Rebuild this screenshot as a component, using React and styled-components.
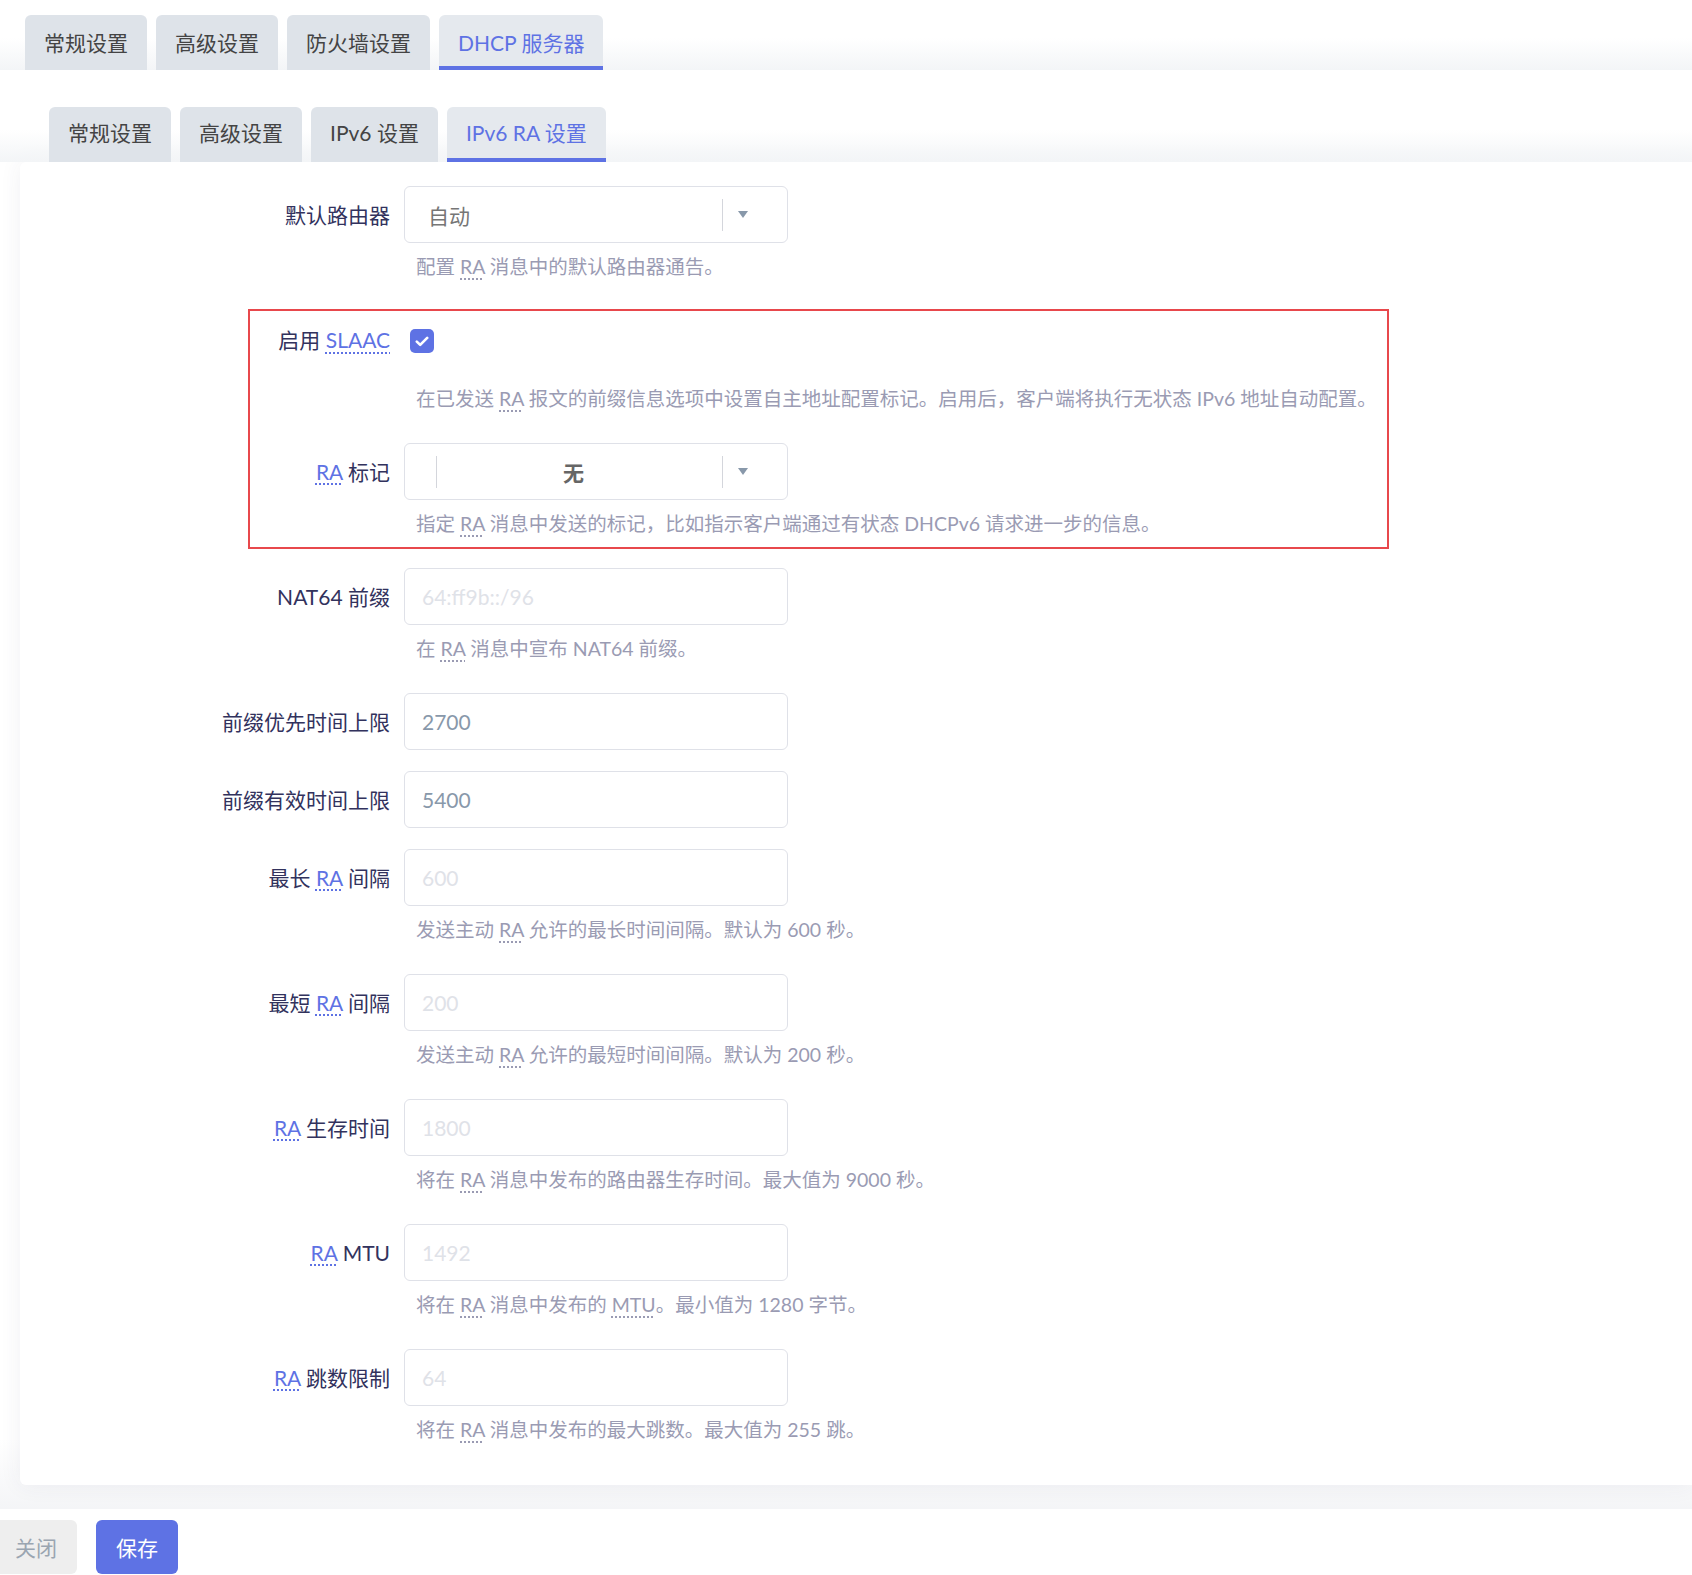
import styled, { createGlobalStyle } from "styled-components";

const GlobalStyle = createGlobalStyle`
  html, body {
    margin: 0;
    padding: 0;
    background: #fff;
    overflow: hidden;
  }
  body {
    font-family: Lato, "Noto Sans CJK SC", sans-serif;
  }
`;

const Page = styled.div`
  width: 1692px;
  height: 1575px;
`;

const TabMenu = styled.ul`
  position: relative;
  z-index: 1;
  list-style: none;
  margin: ${(p) => p.$top}px 0 0;
  padding: 0 0 0 ${(p) => p.$indent}px;
  display: flex;
  gap: 9px;
  background: linear-gradient(180deg, rgba(243, 245, 247, 0) 0%, #f3f5f7 100%)
    bottom / 100% 32px no-repeat;
`;

const Tab = styled.li`
  height: 55px;
  padding: 0 19px ${(p) => p.$lift || 2}px;
  box-sizing: border-box;
  display: flex;
  align-items: center;
  font-size: 21px;
  color: ${(p) => (p.$active ? "#5e72e4" : "#444")};
  background: ${(p) => (p.$active ? "#e5e9ee" : "#dee3e9")};
  border-radius: 6px 6px 0 0;
  box-shadow: ${(p) => (p.$active ? "inset 0 -4px 0 #5e72e4" : "none")};
  white-space: nowrap;
`;

const Body = styled.div`
  padding-bottom: 24px;
  background: linear-gradient(180deg, rgba(244, 245, 247, 0) 0%, #f4f5f7 100%)
    bottom / 100% 70px no-repeat;
`;

const Panel = styled.div`
  position: relative;
  margin-left: 20px;
  padding: 24px 0 32px;
  background: #fff;
  border-radius: 6px 0 0 6px;
  box-shadow: 0 0 22px rgba(50, 50, 93, 0.07);
`;

const Form = styled.div`
  display: flex;
  flex-direction: column;
  gap: 21px;
`;

const Highlight = styled.div`
  position: absolute;
  left: 228px;
  top: 147px;
  width: 1141px;
  height: 240px;
  box-sizing: border-box;
  border: 2px solid #e8484c;
  pointer-events: none;
`;

const Row = styled.div`
  display: grid;
  grid-template-columns: 370px 1fr;
  column-gap: 14px;
`;

const Label = styled.label`
  grid-column: 1;
  align-self: center;
  margin-bottom: ${(p) => p.$raise || 0}px;
  text-align: right;
  font-size: 21px;
  line-height: 28px;
  color: #32325d;
  white-space: nowrap;
`;

const Control = styled.div`
  grid-column: 2;
  height: ${(p) => p.$h || 57}px;
  display: flex;
  align-items: center;
`;

const Description = styled.div`
  grid-column: 2;
  padding: 10px 0 9px 12px;
  font-size: 19.5px;
  line-height: 28px;
  color: #9a9bb3;
  white-space: nowrap;
`;

const Abbr = styled.abbr`
  color: ${(p) => (p.$accent ? "#5e72e4" : "inherit")};
  text-decoration: underline dotted;
  text-decoration-color: ${(p) => (p.$accent ? "#5e72e4" : "#9a9bb3")};
  text-underline-offset: 4px;
  text-decoration-thickness: 2px;
  cursor: help;
`;

const TextInput = styled.input`
  width: 384px;
  height: 57px;
  box-sizing: border-box;
  border: 1px solid #dfe1e8;
  border-radius: 6px;
  padding: 0 17px;
  font-family: inherit;
  font-size: 21px;
  color: #8898aa;
  background: #fff;
  outline: none;

  &::placeholder {
    color: #dfe2e8;
  }
`;

const Select = styled.div`
  width: 384px;
  height: 57px;
  box-sizing: border-box;
  border: 1px solid #dfe1e8;
  border-radius: 6px;
  display: flex;
  align-items: center;
  background: #fff;
`;

const SelectValue = styled.span`
  flex: 1;
  padding: ${(p) => (p.$center ? "0 12px 0 0" : "0 0 0 23px")};
  text-align: ${(p) => (p.$center ? "center" : "left")};
  font-size: 21px;
  font-weight: ${(p) => (p.$center ? 700 : 400)};
  color: ${(p) => (p.$center ? "#666" : "#767676")};
`;

const Divider = styled.span`
  width: 1px;
  height: 32px;
  background: #d4d6dc;
  margin-left: ${(p) => p.$left || 0}px;
`;

const Caret = styled.span`
  width: 64px;
  display: flex;
  align-items: center;
  padding-left: 15px;
  box-sizing: border-box;
`;

const Checkbox = styled.span`
  margin: 0 0 4px 6px;
  width: 24px;
  height: 24px;
  border-radius: 5px;
  background: #5e72e4;
  display: flex;
  align-items: center;
  justify-content: center;
`;

const Footer = styled.div`
  display: flex;
  gap: 19px;
  margin-left: -5px;
  padding-top: 11px;
`;

const Button = styled.button`
  height: 54px;
  width: 82px;
  border: none;
  border-radius: 6px;
  font-family: inherit;
  font-size: 21px;
  color: ${(p) => (p.$primary ? "#fff" : "#9aa5b1")};
  background: ${(p) => (p.$primary ? "#5e72e4" : "#eeeeee")};
`;

function CaretIcon() {
  return (
    <svg width="10" height="7" viewBox="0 0 10 7">
      <path d="M0 0h10L5 7z" fill="#8898aa" />
    </svg>
  );
}

function FieldSelect({ value, multi }) {
  return (
    <Select>
      {multi && <Divider $left={31} />}
      <SelectValue $center={multi}>{value}</SelectValue>
      <Divider />
      <Caret>
        <CaretIcon />
      </Caret>
    </Select>
  );
}

const RA = ({ accent }) => (
  <Abbr $accent={accent} title="Router Advertisement">
    RA
  </Abbr>
);

const fields = [
  {
    label: "默认路由器",
    control: <FieldSelect value="自动" />,
    desc: <>配置 <RA /> 消息中的默认路由器通告。</>,
  },
  {
    label: (
      <>
        启用 <Abbr $accent title="Stateless Address Auto Config">SLAAC</Abbr>
      </>
    ),
    h: 64,
    raise: 6,
    control: (
      <Checkbox>
        <svg width="14" height="11" viewBox="0 0 14 11">
          <path d="M1.8 5.6l3.4 3.3 7-7" fill="none" stroke="#fff" strokeWidth="2.6" strokeLinecap="round" strokeLinejoin="round" />
        </svg>
      </Checkbox>
    ),
    desc: (
      <>
        在已发送 <RA /> 报文的前缀信息选项中设置自主地址配置标记。启用后，客户端将执行无状态 IPv6 地址自动配置。
      </>
    ),
  },
  {
    label: <><RA accent /> 标记</>,
    control: <FieldSelect value="无" multi />,
    desc: <>指定 <RA /> 消息中发送的标记，比如指示客户端通过有状态 DHCPv6 请求进一步的信息。</>,
  },
  {
    label: "NAT64 前缀",
    placeholder: "64:ff9b::/96",
    desc: <>在 <RA /> 消息中宣布 NAT64 前缀。</>,
  },
  { label: "前缀优先时间上限", value: "2700" },
  { label: "前缀有效时间上限", value: "5400" },
  {
    label: <>最长 <RA accent /> 间隔</>,
    placeholder: "600",
    desc: <>发送主动 <RA /> 允许的最长时间间隔。默认为 600 秒。</>,
  },
  {
    label: <>最短 <RA accent /> 间隔</>,
    placeholder: "200",
    desc: <>发送主动 <RA /> 允许的最短时间间隔。默认为 200 秒。</>,
  },
  {
    label: <><RA accent /> 生存时间</>,
    placeholder: "1800",
    desc: <>将在 <RA /> 消息中发布的路由器生存时间。最大值为 9000 秒。</>,
  },
  {
    label: <><RA accent /> MTU</>,
    placeholder: "1492",
    desc: (
      <>
        将在 <RA /> 消息中发布的 <Abbr title="Maximum Transmission Unit">MTU</Abbr>。最小值为 1280 字节。
      </>
    ),
  },
  {
    label: <><RA accent /> 跳数限制</>,
    placeholder: "64",
    desc: <>将在 <RA /> 消息中发布的最大跳数。最大值为 255 跳。</>,
  },
];

const topTabs = ["常规设置", "高级设置", "防火墙设置", "DHCP 服务器"];
const subTabs = ["常规设置", "高级设置", "IPv6 设置", "IPv6 RA 设置"];

export default function App() {
  return (
    <Page>
      <GlobalStyle />
      <TabMenu $top={15} $indent={25}>
        {topTabs.map((t, i) => (
          <Tab key={t} $active={i === 3}>
            {t}
          </Tab>
        ))}
      </TabMenu>
      <Body>
        <TabMenu $top={37} $indent={49}>
          {subTabs.map((t, i) => (
            <Tab key={t} $active={i === 3} $lift={5}>
              {t}
            </Tab>
          ))}
        </TabMenu>
        <Panel>
          <Form>
            {fields.map((f, i) => (
              <Row key={i}>
                <Label $raise={f.raise}>{f.label}</Label>
                <Control $h={f.h}>
                  {f.control || (
                    <TextInput
                      readOnly
                      defaultValue={f.value}
                      placeholder={f.placeholder}
                    />
                  )}
                </Control>
                {f.desc && <Description>{f.desc}</Description>}
              </Row>
            ))}
          </Form>
          <Highlight />
        </Panel>
      </Body>
      <Footer>
        <Button>关闭</Button>
        <Button $primary>保存</Button>
      </Footer>
    </Page>
  );
}
